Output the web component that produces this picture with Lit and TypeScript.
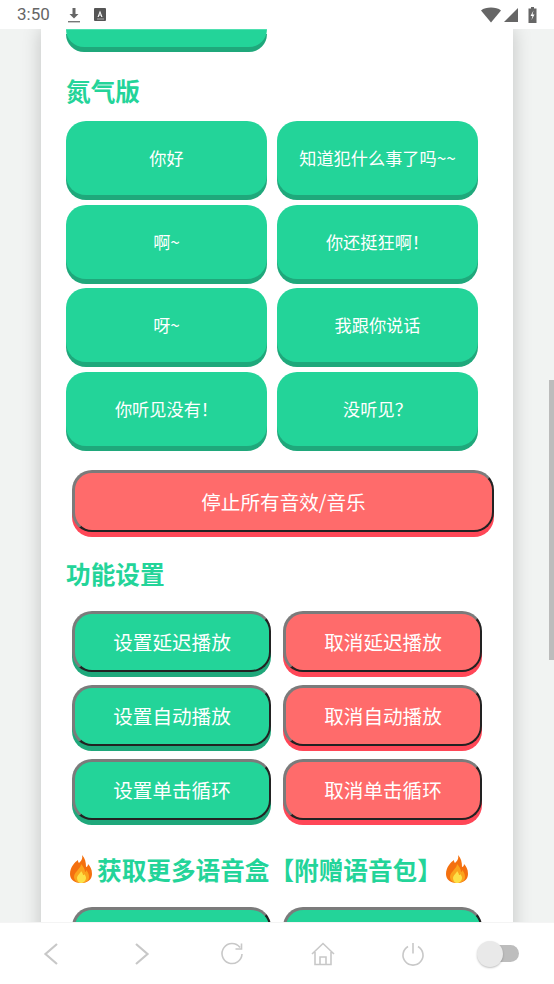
import { LitElement, html, css } from "lit";
import { customElement } from "lit/decorators.js";

const flame = html`<svg class="flame" viewBox="0 0 24 28" aria-hidden="true">
  <path d="M13 0c1 4-1 6-3 8-1-1-1-2-1-3-3 2-8 7-8 14 0 6 5 9 11 9s11-3 11-9c0-5-2-8-4-10 0 2-1 3-2 3 0-5-1-9-4-12z" fill="#f4700f"/>
  <path d="M12 9c0 3-2 4-4 7-2 2-3 4-3 6 0 3 3 6 7 6s8-2 8-6c0-3-1-5-3-7 0 1 0 2-1 2 0-3-2-6-4-8z" fill="#fba31c"/>
  <path d="M12 16c0 2-4 4-4 7 0 3 2 5 4 5s5-2 5-5c0-2-1-3-2-4 0 1 0 1-1 1 0-1-1-3-2-4z" fill="#fde047"/>
</svg>`;

@customElement("app-root")
export class AppRoot extends LitElement {
  static styles = css`
    :host { display: block; width: 554px; height: 984px; font-family: "Noto Sans CJK SC", "Noto Sans", sans-serif; }
    .screen { width: 554px; height: 984px; display: flex; flex-direction: column; background: #fff; overflow: hidden; position: relative; }
    .status { height: 29px; flex: none; background: #fff; display: flex; align-items: center; padding: 0 14px 0 17px; box-sizing: border-box; position: relative; z-index: 2; }
    .time { font: 400 17px/1 Roboto, sans-serif; color: #666; width: 50px; }
    .sicons { display: flex; align-items: center; gap: 13px; }
    .sright { margin-left: auto; display: flex; align-items: center; gap: 3px; padding-right: 3px; }
    .batt { margin-left: 7px; }
    .page { flex: 1; min-height: 0; background: #f1f3f2; overflow: hidden; position: relative; display: flex; justify-content: center; }
    .card { width: 472px; flex: none; background: #fff; box-shadow: 0 0 18px rgba(0,0,0,.2); padding: 0 25px; box-sizing: border-box; height: 1000px; }
    .stub { width: 201px; height: 18px; background: #23d499; border-radius: 0 0 20px 20px; box-shadow: 0 5px 0 #1fa87b; border-top: 1px solid #4fe0b0; box-sizing: border-box; }
    h2 { margin: 0; color: #23d499; font-size: 24.64px; font-weight: 700; line-height: 36px; }
    .t1 { margin-top: 25px; }
    .t2 { margin-top: 23px; }
    .more { margin-top: 31px; display: flex; align-items: center; margin-left: 3px; white-space: nowrap; }
    .flame { width: 24px; height: 28px; flex: none; }
    .tt { margin-left: 4px; width: 348px; flex: none; }
    .voice { margin-top: 13px; display: grid; grid-template-columns: 201px 201px; column-gap: 10px; row-gap: 9.67px; }
    .vb { height: 74px; padding-bottom: 1px; box-sizing: border-box; background: #23d499; color: #fff; border-radius: 20px; box-shadow: 0 5px 0 #1fa87b; display: flex; align-items: center; justify-content: center; font-size: 17.2px; }
    .fb { border-style: solid; border-width: 3px 2px 2px 3px; border-color: #7b7b7b #222 #222 #7b7b7b; border-radius: 20px; color: #fff; display: flex; align-items: center; justify-content: center; box-sizing: border-box; }
    .stop { margin: 24px 0 0 6px; width: 422px; height: 62px; font-size: 19.6px; }
    .red { background: #ff6b6b; box-shadow: 0 5px 0 #ff4757; }
    .green { background: #23d499; box-shadow: 0 5px 0 #1fa87b; }
    .func { margin: 20px 0 0 6px; display: grid; grid-template-columns: 199px 199px; column-gap: 12px; row-gap: 13px; }
    .func .fb { height: 61px; font-size: 19.6px; }
    .scroll { position: absolute; right: 0; top: 351px; width: 5px; height: 280px; background: #bcbcbc; }
    .nav { height: 62px; flex: none; background: #fff; border-top: 1px solid #f4f4f4; box-sizing: border-box; display: grid; grid-template-columns: repeat(5, 90.5px) 1fr; padding-left: 6px; align-items: center; justify-items: center; }
    .nav svg { display: block; fill: none; stroke: #c8c8c8; stroke-width: 1.6; }
    .nav .chev { stroke-width: 2.2; }
    .toggle { width: 42px; height: 26px; position: relative; justify-self: start; margin-left: 18px; }
    .track { position: absolute; left: 11px; top: 4.5px; width: 31px; height: 17px; border-radius: 9px; background: #bdbdbd; }
    .knob { position: absolute; left: 0; top: 0; width: 26px; height: 26px; border-radius: 50%; background: #e9e9e9; box-shadow: 0 1px 2px rgba(0,0,0,.25); }
  `;

  render() {
    const voice = ["你好", "知道犯什么事了吗~~", "啊~", "你还挺狂啊！", "呀~", "我跟你说话", "你听见没有！", "没听见？"];
    const func = [["设置延迟播放", "取消延迟播放"], ["设置自动播放", "取消自动播放"], ["设置单击循环", "取消单击循环"]];
    return html`<div class="screen">
      <div class="status">
        <span class="time">3:50</span>
        <span class="sicons">
          <svg width="14" height="16" viewBox="0 0 14 16"><path d="M5.500 1h3v6h3L7 11.500 2.500 7h3z" fill="#666"/><rect x="1" y="14" width="12" height="1.400" fill="#777"/></svg>
          <svg width="12" height="13" viewBox="0 0 12 13"><rect width="12" height="13" rx="1" fill="#555"/><path d="M6 2.500 8.500 9H7.300l-.5-1.400H5.200L4.700 9H3.500zM5.500 6.700h1L6 5z" fill="#fff"/><rect x="3" y="10.500" width="7" height="1" fill="#aaa"/></svg>
        </span>
        <span class="sright">
          <svg width="20" height="16" viewBox="0 0 20 16"><path d="M0 3.500C2.500 1.300 6 .5 10 .5s7.500.8 10 3L10 15.500z" fill="#666"/></svg>
          <svg width="14" height="15" viewBox="0 0 14 15"><path d="M14 1v14H0z" fill="#666"/></svg>
          <svg width="9" height="16" viewBox="0 0 9 16" class="batt"><path d="M3 0h3v1.500h2.500V16H.5V1.500H3z" fill="#666"/><path d="M5.500 3.500 2.500 9h2l-1 4 3-5.500h-2z" fill="#fff"/></svg>
        </span>
      </div>
      <div class="page">
        <div class="card">
          <div class="stub"></div>
          <h2 class="t1">氮气版</h2>
          <div class="voice">${voice.map((v) => html`<div class="vb">${v}</div>`)}</div>
          <div class="fb red stop">停止所有音效/音乐</div>
          <h2 class="t2">功能设置</h2>
          <div class="func">${func.map(([a, b]) => html`<div class="fb green">${a}</div><div class="fb red">${b}</div>`)}</div>
          <h2 class="more">${flame}<span class="tt">获取更多语音盒【附赠语音包】</span>${flame}</h2>
          <div class="func"><div class="fb green"></div><div class="fb green"></div></div>
        </div>
        <div class="scroll"></div>
      </div>
      <div class="nav">
        <svg class="chev" width="16" height="24" viewBox="0 0 16 24"><path d="M14 2 2.500 12 14 22"/></svg>
        <svg class="chev" width="16" height="24" viewBox="0 0 16 24"><path d="M2 2l11.500 10L2 22"/></svg>
        <svg width="24" height="24" viewBox="0 0 24 24"><path d="M20 5.500A10 10 0 1 0 22 12M21.500 1.500V7h-6"/></svg>
        <svg width="24" height="24" viewBox="0 0 24 24"><path d="M1 12 12 1.500 23 12M4 10v12.500h16V10M9 22.500V15h6v7.500"/></svg>
        <svg width="24" height="24" viewBox="0 0 24 24"><path d="M7 4.500a10 10 0 1 0 10 0M12 1v10.500"/></svg>
        <div class="toggle"><div class="track"></div><div class="knob"></div></div>
      </div>
    </div>`;
  }
}
